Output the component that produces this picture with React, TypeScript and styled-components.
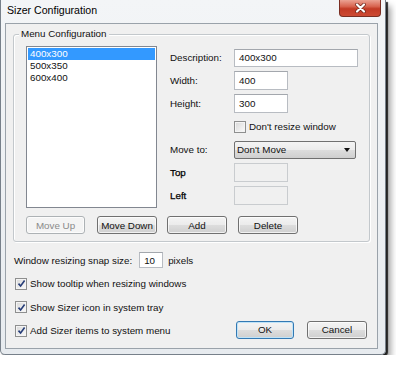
import React from "react";
import styled, { createGlobalStyle } from "styled-components";

const GlobalStyle = createGlobalStyle`
  html, body {
    margin: 0;
    padding: 0;
    background: #ffffff;
  }
  body {
    font-family: "Liberation Sans", Arial, sans-serif;
    font-size: 9.8px;
    color: #111;
  }
`;

const Window = styled.div`
  box-sizing: border-box;
  width: 386px;
  height: 355px;
  padding: 0 7px 5px 4px;
  display: flex;
  flex-direction: column;
  background: linear-gradient(#f3f5f7, #e7ebef);
  border: 1px solid #77808a;
  border-top: none;
  border-radius: 0 0 5px 5px;
  box-shadow: 2px 2px 1px rgba(0, 0, 0, 0.8), 5px 6px 6px rgba(0, 0, 0, 0.35);
`;

const TitleBar = styled.div`
  height: 23px;
  display: flex;
  align-items: flex-start;
  padding-left: 2px;
`;

const Title = styled.div`
  font-size: 10.6px;
  line-height: 13px;
  padding-top: 4px;
  color: #000;
`;

const CloseButton = styled.div`
  margin-left: auto;
  margin-right: -3px;
  width: 42px;
  height: 17px;
  box-sizing: border-box;
  display: flex;
  align-items: center;
  justify-content: center;
  border: 1px solid #7a2e22;
  border-top: none;
  border-radius: 0 0 4px 4px;
  background: linear-gradient(#eba293 0%, #d86450 40%, #c23a25 55%, #cc4a33 100%);
`;

const Client = styled.div`
  flex: 1;
  display: flex;
  flex-direction: column;
  padding: 10px 7px 0 7px;
  background: #f0f0f0;
  border: 1px solid #9aa2aa;
`;

const GroupBox = styled.div`
  position: relative;
  height: 208px;
  box-sizing: border-box;
  padding: 11px 11px 7px 12px;
  border: 1px solid #c3c8cc;
  border-radius: 3px;
  box-shadow: inset 1px 1px 0 #ffffff, 1px 1px 0 #ffffff;
  display: flex;
  gap: 10px;
`;

const Legend = styled.span`
  position: absolute;
  top: -7px;
  left: 5px;
  padding: 0 2px;
  line-height: 12px;
  background: #f0f0f0;
`;

const Column = styled.div<{ $grow?: boolean }>`
  display: flex;
  flex-direction: column;
  gap: 8px;
  width: ${(p) => (p.$grow ? "auto" : "131px")};
  flex: ${(p) => (p.$grow ? 1 : "none")};
`;

const ListBox = styled.div`
  height: 162px;
  box-sizing: border-box;
  padding: 1px;
  background: #ffffff;
  border: 1px solid #828790;
`;

const ListItem = styled.div<{ $selected?: boolean }>`
  height: 12px;
  line-height: 12px;
  padding-left: 2px;
  background: ${(p) => (p.$selected ? "#3399ff" : "transparent")};
  color: ${(p) => (p.$selected ? "#ffffff" : "#111")};
`;

const ButtonRow = styled.div<{ $gap?: number }>`
  display: flex;
  gap: ${(p) => p.$gap ?? 12}px;
`;

const Button = styled.div<{ $width: number; $disabled?: boolean; $default?: boolean }>`
  width: ${(p) => p.$width}px;
  height: 18px;
  box-sizing: border-box;
  display: flex;
  align-items: center;
  justify-content: center;
  border-radius: 3px;
  border: 1px solid
    ${(p) => (p.$disabled ? "#adb2b5" : p.$default ? "#3379b3" : "#707070")};
  background: ${(p) =>
    p.$disabled
      ? "#f4f4f4"
      : "linear-gradient(#f4f4f4 0%, #ebebeb 50%, #dddddd 51%, #cfcfcf 100%)"};
  box-shadow: ${(p) =>
    p.$default ? "inset 0 0 0 1px #bfe3f8" : "inset 0 0 0 1px rgba(255,255,255,0.7)"};
  color: ${(p) => (p.$disabled ? "#8a8a8a" : "#111")};
`;

const FormGrid = styled.div`
  height: 162px;
  display: grid;
  grid-template-columns: 67px 1fr;
  grid-template-rows: repeat(7, 23px);
  align-items: center;
`;

const Label = styled.span<{ $dim?: boolean }>`
  padding-left: 3px;
  color: ${(p) => (p.$dim ? "#000" : "#111")};
  -webkit-text-stroke: ${(p) => (p.$dim ? "0.25px #000" : "0")};
`;

const TextInput = styled.div<{ $width?: number; $disabled?: boolean; $height?: number }>`
  width: ${(p) => (p.$width ? `${p.$width}px` : "100%")};
  height: ${(p) => p.$height ?? 19}px;
  box-sizing: border-box;
  display: flex;
  align-items: center;
  padding-left: 4px;
  background: ${(p) => (p.$disabled ? "#f0f0f0" : "#ffffff")};
  border: 1px solid ${(p) => (p.$disabled ? "#c9cccf" : "#b8bcc2")};
  border-top-color: ${(p) => (p.$disabled ? "#c9cccf" : "#a3a7ad")};
`;

const Select = styled.div`
  width: 122px;
  height: 18px;
  box-sizing: border-box;
  display: flex;
  align-items: center;
  justify-content: space-between;
  padding: 0 5px 0 2px;
  border: 1px solid #707070;
  border-radius: 2px;
  background: linear-gradient(#f4f4f4 0%, #ebebeb 50%, #dddddd 51%, #cfcfcf 100%);
`;

const Arrow = styled.span`
  width: 0;
  height: 0;
  border-left: 3.5px solid transparent;
  border-right: 3.5px solid transparent;
  border-top: 4px solid #111;
`;

const CheckRow = styled.label`
  display: flex;
  align-items: center;
  gap: 3px;
  height: 16px;
`;

const Box = styled.span`
  width: 12px;
  height: 12px;
  box-sizing: border-box;
  display: flex;
  align-items: center;
  justify-content: center;
  border: 1px solid #8e8f8f;
  background: linear-gradient(135deg, #d8d8d8, #fbfbfb);
  box-shadow: inset 0 0 0 1px #f4f4f4;
`;

const Bottom = styled.div`
  margin-top: 10px;
  padding: 0 3px 0 1px;
  display: flex;
  justify-content: space-between;
  align-items: flex-end;
`;

const Options = styled.div`
  display: flex;
  flex-direction: column;
  gap: 7.5px;
`;

const SnapRow = styled.div`
  display: flex;
  align-items: center;
  height: 16px;
`;

const SnapInput = styled.div`
  width: 24px;
  height: 16px;
  box-sizing: border-box;
  margin: 0 5px 0 7px;
  padding-left: 4px;
  display: flex;
  align-items: center;
  background: #ffffff;
  border: 1px solid #b8bcc2;
  border-top-color: #a3a7ad;
`;

const Indent = styled.div`
  padding-left: 1px;
`;

const CheckBox = ({ checked }: { checked?: boolean }) => (
  <Box>
    {checked && (
      <svg width="9" height="9" viewBox="0 0 9 9">
        <path d="M1.5 4.6 L3.6 7 L7.6 1.6" fill="none" stroke="#263d78" strokeWidth="1.6" />
      </svg>
    )}
  </Box>
);

const CloseIcon = () => (
  <svg width="13" height="10" viewBox="0 0 13 10">
    <path d="M3 1.5 L10 8.5 M10 1.5 L3 8.5" stroke="#6a2116" strokeWidth="3.6" strokeLinecap="round" />
    <path d="M3 1.5 L10 8.5 M10 1.5 L3 8.5" stroke="#ffffff" strokeWidth="2.2" strokeLinecap="round" />
  </svg>
);

const sizes = ["400x300", "500x350", "600x400"];

const App = () => {
  return (
    <>
      <GlobalStyle />
      <Window>
        <TitleBar>
          <Title>Sizer Configuration</Title>
          <CloseButton>
            <CloseIcon />
          </CloseButton>
        </TitleBar>
        <Client>
          <GroupBox>
            <Legend>Menu Configuration</Legend>
            <Column>
              <ListBox>
                {sizes.map((s, i) => (
                  <ListItem key={s} $selected={i === 0}>
                    {s}
                  </ListItem>
                ))}
              </ListBox>
              <ButtonRow $gap={12}>
                <Button $width={59} $disabled>
                  Move Up
                </Button>
                <Button $width={60}>Move Down</Button>
              </ButtonRow>
            </Column>
            <Column $grow>
              <FormGrid>
                <Label>Description:</Label>
                <TextInput $height={18}>400x300</TextInput>
                <Label>Width:</Label>
                <TextInput $width={54}>400</TextInput>
                <Label>Height:</Label>
                <TextInput $width={54}>300</TextInput>
                <span />
                <CheckRow>
                  <CheckBox />
                  Don't resize window
                </CheckRow>
                <Label>Move to:</Label>
                <Select>
                  Don't Move
                  <Arrow />
                </Select>
                <Label $dim>Top</Label>
                <TextInput $width={54} $disabled />
                <Label $dim>Left</Label>
                <TextInput $width={54} $disabled />
              </FormGrid>
              <ButtonRow $gap={11}>
                <Button $width={60}>Add</Button>
                <Button $width={60}>Delete</Button>
              </ButtonRow>
            </Column>
          </GroupBox>
          <Bottom>
            <Options>
              <SnapRow>
                Window resizing snap size:
                <SnapInput>10</SnapInput>
                pixels
              </SnapRow>
              <Indent>
                <CheckRow>
                  <CheckBox checked />
                  Show tooltip when resizing windows
                </CheckRow>
              </Indent>
              <Indent>
                <CheckRow>
                  <CheckBox checked />
                  Show Sizer icon in system tray
                </CheckRow>
              </Indent>
              <Indent>
                <CheckRow>
                  <CheckBox checked />
                  Add Sizer items to system menu
                </CheckRow>
              </Indent>
            </Options>
            <ButtonRow $gap={13}>
              <Button $width={58} $default>
                OK
              </Button>
              <Button $width={60}>Cancel</Button>
            </ButtonRow>
          </Bottom>
        </Client>
      </Window>
    </>
  );
};

export default App;
